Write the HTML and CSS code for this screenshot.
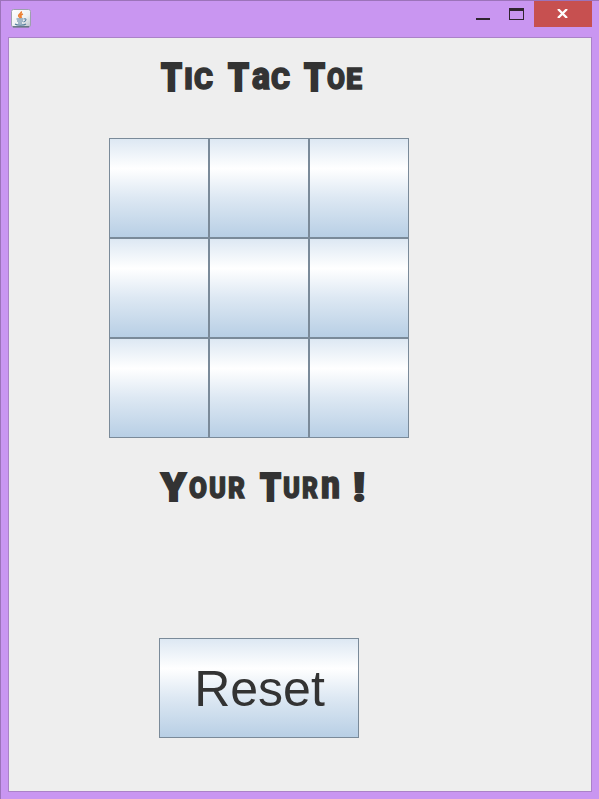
FILE: index.html
```html
<!DOCTYPE html>
<html lang="en">
<head>
<meta charset="utf-8">
<title>Tic Tac Toe</title>
<link rel="stylesheet" href="styles.css">
</head>
<body>
<div class="window">
  <header class="titlebar">
    <svg class="app-icon" width="20" height="19" viewBox="0 0 20 19">
      <defs><linearGradient id="tile" x1="0" y1="0" x2="1" y2="1"><stop offset="0" stop-color="#fff"/><stop offset=".6" stop-color="#edf0f2"/><stop offset="1" stop-color="#b8c0c8"/></linearGradient></defs>
      <rect x=".5" y=".5" width="19" height="17.5" rx="2" fill="url(#tile)" stroke="#9d9fae"/>
      <path d="M2 17.8h16" stroke="#536675" stroke-width="1.2"/>
      <path d="M10 2.5c1.5 2-3.5 3-2 5l1.5 1.5M12 5c-3 1-2.5 2-1.5 4" fill="none" stroke="#ec8135" stroke-width="1.7"/>
      <path d="M5.5 10h7M6 12h6M7 14h4M13 10c3-1 2.5 2-.5 3M4 15c2 1.6 9 1.5 11 0" fill="none" stroke="#557c9c" stroke-width="1.1"/>
    </svg>
    <div class="controls">
      <button class="minimize" aria-label="Minimize"></button>
      <button class="maximize" aria-label="Maximize"></button>
      <button class="close" aria-label="Close"><svg width="11" height="9" viewBox="0 0 11 9"><path d="M1 0l9 9M10 0L1 9" stroke="#fff" stroke-width="2.3"/></svg></button>
    </div>
  </header>
  <main class="panel">
    <svg class="display" width="240" height="36" viewBox="0 0 240 36">
      <text y="30.5"><tspan class="cap" x="1" textLength="21" lengthAdjust="spacingAndGlyphs">T</tspan><tspan class="sm" x="24" y="28.5" textLength="9" lengthAdjust="spacingAndGlyphs">i</tspan><tspan class="sm" x="34" textLength="19" lengthAdjust="spacingAndGlyphs">c</tspan> <tspan class="cap" x="68" y="30.5" textLength="21" lengthAdjust="spacingAndGlyphs">T</tspan><tspan class="low" x="92" y="28.5" textLength="18" lengthAdjust="spacingAndGlyphs">a</tspan><tspan class="sm" x="111" textLength="19" lengthAdjust="spacingAndGlyphs">c</tspan> <tspan class="cap" x="144" y="30.5" textLength="21" lengthAdjust="spacingAndGlyphs">T</tspan><tspan class="sm" x="167" y="28.5" textLength="18" lengthAdjust="spacingAndGlyphs">o</tspan><tspan class="sm" x="186" textLength="16" lengthAdjust="spacingAndGlyphs">e</tspan></text>
    </svg>
    <div class="board">
      <button class="tile"></button><button class="tile"></button><button class="tile"></button>
      <button class="tile"></button><button class="tile"></button><button class="tile"></button>
      <button class="tile"></button><button class="tile"></button><button class="tile"></button>
    </div>
    <svg class="display status" width="240" height="36" viewBox="0 0 240 36">
      <text y="30.5"><tspan class="cap" x="1" textLength="25" lengthAdjust="spacingAndGlyphs">Y</tspan><tspan class="sm" x="29" y="28" textLength="18" lengthAdjust="spacingAndGlyphs">o</tspan><tspan class="sm" x="49" textLength="17" lengthAdjust="spacingAndGlyphs">u</tspan><tspan class="sm" x="68" textLength="17" lengthAdjust="spacingAndGlyphs">r</tspan> <tspan class="cap" x="100" y="30.5" textLength="21" lengthAdjust="spacingAndGlyphs">T</tspan><tspan class="sm" x="123" y="28" textLength="17" lengthAdjust="spacingAndGlyphs">u</tspan><tspan class="sm" x="142" textLength="16" lengthAdjust="spacingAndGlyphs">r</tspan><tspan class="low" x="161" textLength="19" lengthAdjust="spacingAndGlyphs">n</tspan> <tspan class="cap" x="193" y="30.5" textLength="12" lengthAdjust="spacingAndGlyphs">!</tspan></text>
    </svg>
    <button class="tile reset">Reset</button>
  </main>
</div>
</body>
</html>
```

FILE: styles.css
```css
* { box-sizing: border-box; }
body { margin: 0; overflow: hidden; }
button { margin: 0; padding: 0; border: 0; border-radius: 0; }
.window {
  width: 599px;
  height: 799px;
  display: flex;
  flex-direction: column;
  padding: 0 7px 7px;
  background: #c996f1;
  box-shadow: inset 1px 1px #9c73ba;
}
.titlebar { height: 37px; flex: none; display: flex; justify-content: space-between; }
.app-icon { margin: 9px 0 0 4px; }
.controls { display: flex; padding-top: 1px; }
.minimize { width: 14px; height: 2px; margin: 17px 19px 0 0; background: #302530; }
.maximize { width: 15px; height: 12px; margin: 7px 10px 0 0; background: transparent; border: 1px solid #302530; border-top-width: 3px; }
.close { width: 58px; height: 26px; padding: 0 2px 1px 0; background: #c75050; display: flex; align-items: center; justify-content: center; }
.panel {
  flex: 1;
  width: 584px;
  margin-left: 1px;
  border: 1px solid #aa82c8;
  background: #eee;
  display: flex;
  flex-direction: column;
  align-items: flex-start;
  padding: 22px 0 0 100px;
}
.display { display: block; margin-left: 51px; overflow: visible; font-family: Roboto, "Liberation Sans", sans-serif; font-weight: 900; fill: #333; stroke: #333; stroke-width: 1.3px; }
.cap { font-size: 38px; stroke-width: 2px; }
.sm { font-size: 29px; text-transform: uppercase; }
.low { font-size: 38px; }
.board { display: grid; grid-template-columns: repeat(3, 100px); grid-auto-rows: 100px; margin-top: 42px; }
.tile { border: 1px solid #7a8a99; background: linear-gradient(#dde8f3 0%, #fff 30%, #dde8f3 60%, #b8cfe5 100%); }
.status { margin-top: 32px; }
.reset { width: 200px; height: 100px; margin: 132px 0 0 50px; padding: 2px 0 0 1px; color: #333; font: 50px "Liberation Sans", Arial, sans-serif; }
```
